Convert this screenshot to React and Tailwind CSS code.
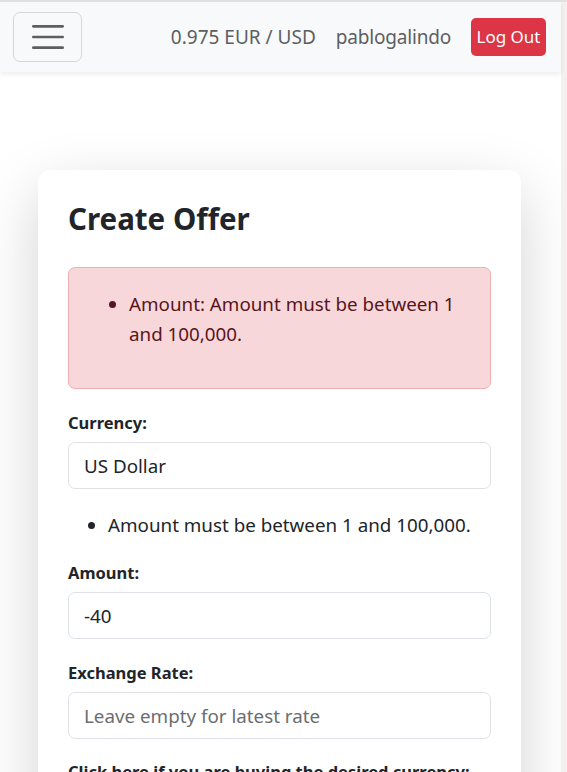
import React from "react";

const font = { fontFamily: '"Noto Sans", "Open Sans", sans-serif' };

function Hamburger() {
  return (
    <button
      type="button"
      className="flex h-[50px] w-[69px] items-center justify-center rounded-[7px] border border-[#d5d6d7]"
    >
      <svg width="40" height="40" viewBox="0 0 30 30" aria-hidden="true">
        <path
          d="M4 7h22M4 15h22M4 23h22"
          stroke="#5c5f62"
          strokeWidth="2"
          strokeLinecap="round"
          fill="none"
        />
      </svg>
    </button>
  );
}

function Field({ label, children, gap = "mb-[21px]" }) {
  return (
    <div className={gap}>
      <label className="mb-[7px] block text-[16.5px] font-bold leading-6 text-[#212529]">{label}</label>
      {children}
    </div>
  );
}

function Input({ value, placeholder }) {
  return (
    <div className="flex h-[47px] items-center rounded-[7px] border border-[#dee2e6] px-[15px] pt-[1px] text-[18.8px]">
      {value ? (
        <span className="text-[#212529]">{value}</span>
      ) : (
        <span className="text-[#6b6e71]">{placeholder}</span>
      )}
    </div>
  );
}

export default function App() {
  return (
    <div className="h-[772px] overflow-hidden bg-white" style={font}>
      <div className="h-[2px] bg-[#e4e1e1]" />
      <div className="flex">
        <div className="min-w-0 flex-1">
          <nav className="relative z-10 flex items-center bg-[#f8f9fa] py-[10px] pl-[13px] pr-[15px] shadow-[0_2px_5px_rgba(0,0,0,0.08)]">
            <Hamburger />
            <div className="ml-auto flex items-center text-[19px] text-[#5c5f62]">
              <span>0.975 EUR / USD</span>
              <span className="ml-[20px] tracking-[-0.01em]">pablogalindo</span>
              <button
                type="button"
                className="ml-[20px] h-[38px] w-[75px] rounded-[5px] bg-[#dc3545] text-[17px] text-white"
              >
                Log Out
              </button>
            </div>
          </nav>

          <main className="pl-[38px] pr-[40px] pt-[98px]">
            <div className="rounded-[12px] bg-white p-[30px] text-[#212529] shadow-[0_20px_60px_rgba(0,0,0,0.175)]">
              <h2 className="mb-[29px] text-[29.5px] font-bold leading-[38px]">Create Offer</h2>

              <div className="mb-[22px] rounded-[7px] border border-[#f1aeb5] bg-[#f8d7da] px-[20px] pb-[19px] pt-[21px] text-[18.8px] leading-[30px] text-[#58151c]">
                <ul className="mb-[20px] list-disc pl-[40px]">
                  <li>Amount: Amount must be between 1 and 100,000.</li>
                </ul>
              </div>

              <Field label="Currency:">
                <Input value="US Dollar" />
              </Field>

              <ul className="mb-[21px] list-disc pl-[40px] text-[18.8px] leading-[30px]">
                <li>Amount must be between 1 and 100,000.</li>
              </ul>

              <Field label="Amount:" gap="mb-[22px]">
                <Input value="-40" />
              </Field>

              <Field label="Exchange Rate:">
                <Input placeholder="Leave empty for latest rate" />
              </Field>

              <Field label="Click here if you are buying the desired currency:">
                <div className="h-[24px] w-[24px] rounded-[5px] border border-[#dee2e6]" />
              </Field>

              <button
                type="button"
                className="h-[47px] rounded-[7px] bg-[#0d6efd] px-[15px] text-[18.8px] text-white"
              >
                Create Offer
              </button>
            </div>
          </main>
        </div>
        <div className="w-[6px] shrink-0 bg-[#f6efef]" />
      </div>
    </div>
  );
}
